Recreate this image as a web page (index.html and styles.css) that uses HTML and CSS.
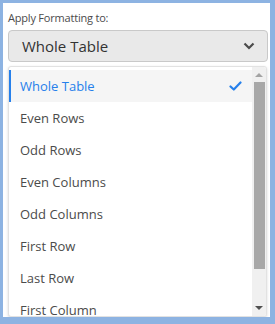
FILE: index.html
```html
<!DOCTYPE html>
<html>
<head>
<meta charset="utf-8">
<link rel="stylesheet" href="styles.css">
</head>
<body>
<div class="frame">
  <div class="panel">
    <div class="label">Apply Formatting to:</div>
    <div class="select">
      <span>Whole Table</span>
      <svg class="chev" width="12" height="8" viewBox="0 0 12 8"><path d="M1.5 1.5 L6 6 L10.5 1.5" fill="none" stroke="#4b4b4b" stroke-width="2.2"/></svg>
    </div>
    <div class="menu">
      <div class="items">
        <div class="item active"><span>Whole Table</span>
          <svg class="check" width="13" height="10" viewBox="0 0 13 10"><path d="M1.5 5.5 L4.8 8.5 L11.5 1.5" fill="none" stroke="#2680eb" stroke-width="2.2" stroke-linecap="round" stroke-linejoin="round"/></svg>
        </div>
        <div class="item">Even Rows</div>
        <div class="item">Odd Rows</div>
        <div class="item">Even Columns</div>
        <div class="item">Odd Columns</div>
        <div class="item">First Row</div>
        <div class="item">Last Row</div>
        <div class="item">First Column</div>
      </div>
      <div class="scrollbar">
        <div class="arrow up"></div>
        <div class="thumb"></div>
        <div class="arrow down"></div>
      </div>
    </div>
  </div>
</div>
</body>
</html>
```

FILE: styles.css
```css
html, body { margin: 0; padding: 0; }
body { width: 275px; height: 324px; overflow: hidden; font-family: "Open Sans", "Noto Sans", sans-serif; }
.frame {
  box-sizing: border-box;
  width: 275px; height: 324px;
  background: #8db3e2;
  padding: 3px 5px 7px 3px;
}
.panel {
  box-sizing: border-box;
  height: 100%;
  background: #fff;
  padding: 8px 2px 0 5px;
  overflow: hidden;
  display: flex;
  flex-direction: column;
}
.label {
  font-size: 11px;
  color: #4b4b4b;
  line-height: 14px;
  letter-spacing: -0.2px;
}
.select {
  margin-top: 5px;
  height: 32px;
  box-sizing: border-box;
  background: #e9e9e9;
  border: 1px solid #c9c9c9;
  border-radius: 4px;
  display: flex;
  align-items: center;
  justify-content: space-between;
  padding: 0 12px 0 13px;
  font-size: 15px;
  color: #333;
}
.chev { display: block; }
.menu {
  margin-top: 4px;
  margin-right: 1px;
  flex: 1;
  display: flex;
  background: #fff;
  border: 1px solid #e2e2e2;
  border-radius: 3px;
  box-shadow: 0 1px 3px rgba(0,0,0,0.15);
  overflow: hidden;
}
.items {
  flex: 1;
  padding-top: 3px;
}
.item {
  height: 32px;
  display: flex;
  align-items: center;
  justify-content: space-between;
  padding: 0 10px 0 9px;
  font-size: 13px;
  color: #4b4b4b;
  border-left: 2px solid transparent;
}
.item.active {
  background: #f5f5f5;
  color: #2680eb;
  border-left-color: #2680eb;
}
.check { display: block; }
.scrollbar {
  width: 14px;
  background: #f0f0f0;
  display: flex;
  flex-direction: column;
  align-items: center;
}
.arrow { width: 0; height: 0; border-left: 4px solid transparent; border-right: 4px solid transparent; }
.arrow.up { margin-top: 6px; border-bottom: 4px solid #a3a3a3; }
.arrow.down { margin-top: auto; margin-bottom: 6px; border-top: 4px solid #505050; }
.thumb {
  margin-top: 5px;
  width: 11px;
  height: 187px;
  background: #a8a8a8;
}
```
